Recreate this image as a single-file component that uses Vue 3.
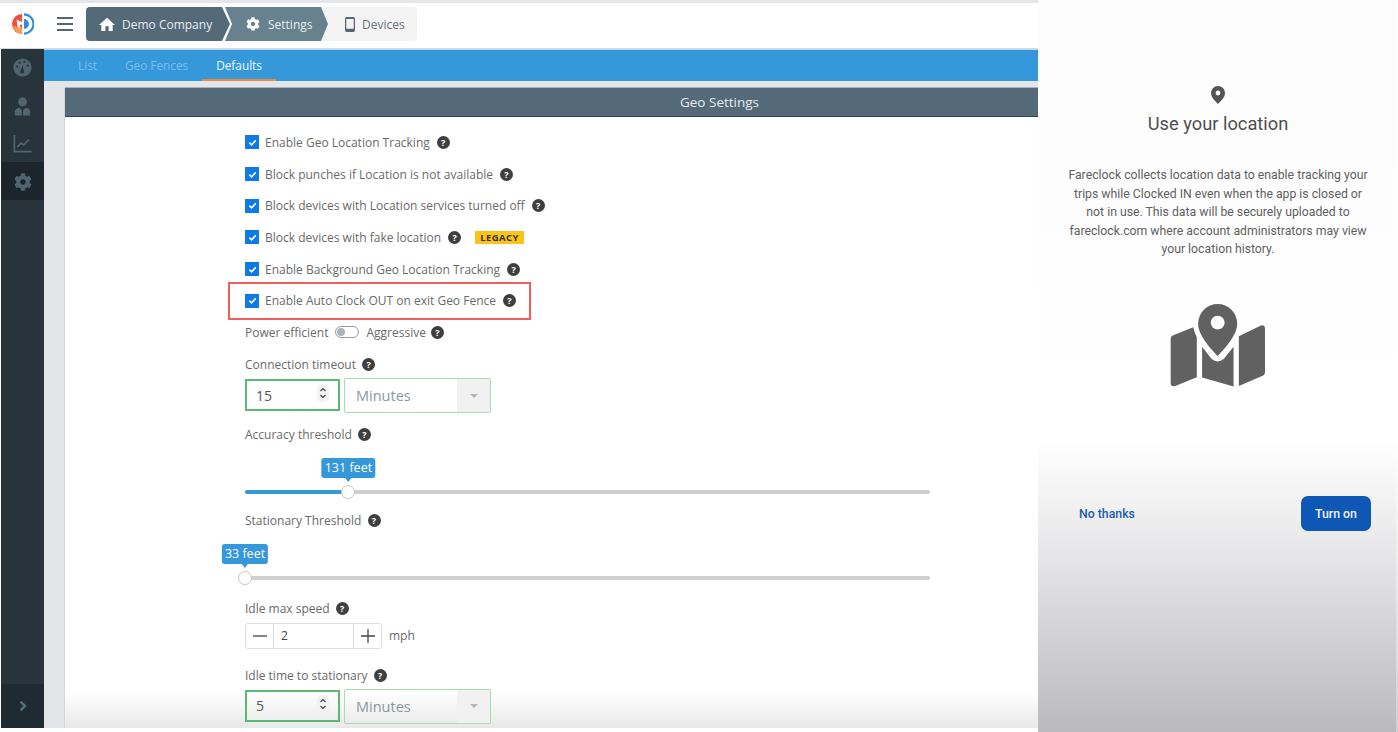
<script setup>
const gearPath = 'M487.4 315.7l-42.6-24.6c4.3-23.2 4.3-47 0-70.2l42.6-24.6c4.9-2.8 7.1-8.6 5.5-14-11.1-35.6-30-67.8-54.7-94.6-3.8-4.1-10-5.1-14.8-2.3L380.8 110c-17.9-15.4-38.5-27.3-60.8-35.1V25.8c0-5.6-3.9-10.5-9.4-11.7-36.7-8.2-74.3-7.8-109.2 0-5.5 1.2-9.4 6.1-9.4 11.7V75c-22.2 7.9-42.8 19.8-60.8 35.1L88.7 85.5c-4.9-2.8-11-1.9-14.8 2.3-24.7 26.7-43.6 58.9-54.7 94.6-1.7 5.4.6 11.2 5.5 14L67.3 221c-4.3 23.2-4.3 47 0 70.2l-42.6 24.6c-4.9 2.8-7.1 8.6-5.5 14 11.1 35.6 30 67.8 54.7 94.6 3.8 4.1 10 5.1 14.8 2.3l42.6-24.6c17.9 15.4 38.5 27.3 60.8 35.1v49.2c0 5.6 3.9 10.5 9.4 11.7 36.7 8.2 74.3 7.8 109.2 0 5.5-1.2 9.4-6.1 9.4-11.7v-49.2c22.2-7.9 42.8-19.8 60.8-35.1l42.6 24.6c4.9 2.8 11 1.9 14.8-2.3 24.7-26.7 43.6-58.9 54.7-94.6 1.5-5.5-.7-11.3-5.6-14.1zM256 336c-44.1 0-80-35.9-80-80s35.9-80 80-80 80 35.9 80 80-35.9 80-80 80z'

const checks = [
  { label: 'Enable Geo Location Tracking' },
  { label: 'Block punches if Location is not available' },
  { label: 'Block devices with Location services turned off' },
  { label: 'Block devices with fake location', badge: 'LEGACY' },
  { label: 'Enable Background Geo Location Tracking' },
  { label: 'Enable Auto Clock OUT on exit Geo Fence', marked: true }
]
</script>

<template>
  <div class="page">
    <div class="admin">
      <header class="topbar">
        <svg class="logo" viewBox="0 0 24 24">
          <path d="M11 1 A11 11 0 0 0 11 23 Z" fill="#f2503f" />
          <path d="M1 14 A10.5 10.5 0 0 0 11 23 L11 17 Z" fill="#f9a24e" />
          <path d="M13 1.5 A10.5 10.5 0 0 1 13 22.5" fill="none" stroke="#2f8fdc" stroke-width="2.4" />
          <path d="M13 6.5 A5.5 5.5 0 0 1 13 17.5 Z" fill="#2f8fdc" />
          <path d="M5 7 L11 10 L11 12.5 L8 13 L10 17 L6 15 Z" fill="#fff" />
        </svg>
        <div class="burger"><i></i><i></i><i></i></div>
        <nav class="crumbs">
          <div class="crumb crumb-a">
            <svg class="crumb-icon" viewBox="0 0 24 24"><path d="M12 2.5 L24 13.5 L20.5 13.5 L20.5 22.5 L14.5 22.5 L14.5 15.5 L9.5 15.5 L9.5 22.5 L3.5 22.5 L3.5 13.5 L0 13.5 Z" fill="#fff" /></svg>
            Demo Company
          </div>
          <div class="crumb crumb-b">
            <svg class="crumb-icon gear" viewBox="0 0 512 512"><path :d="gearPath" fill="#fff" /></svg>
            Settings
          </div>
          <div class="crumb crumb-c">
            <svg class="crumb-icon phone" viewBox="0 0 12 18"><path fill-rule="evenodd" d="M2 0 H10 A2 2 0 0 1 12 2 V16 A2 2 0 0 1 10 18 H2 A2 2 0 0 1 0 16 V2 A2 2 0 0 1 2 0 Z M1.5 2.5 V14 H10.5 V2.5 Z" fill="#55666f" /></svg>
            Devices
          </div>
        </nav>
      </header>

      <div class="body">
        <aside class="sidebar">
          <div class="side-item">
            <svg viewBox="0 0 20 20" width="19" height="19">
              <circle cx="10" cy="10" r="9.5" fill="#4f6670" />
              <path d="M7 16 L10 8 L12 16 Z" fill="#27343c" />
              <circle cx="4.5" cy="9" r="1.2" fill="#27343c" />
              <circle cx="7" cy="5" r="1.2" fill="#27343c" />
              <circle cx="12" cy="4" r="1.2" fill="#27343c" />
              <circle cx="15.5" cy="8" r="1.2" fill="#27343c" />
            </svg>
          </div>
          <div class="side-item side-user">
            <svg viewBox="0 0 20 22" width="17" height="19">
              <circle cx="10" cy="5.5" r="5.2" fill="#4f6670" />
              <path d="M1 21.5 L1 17 Q1 13.5 6 12.5 L9.2 15 L9.2 21.5 Z M19 21.5 L19 17 Q19 13.5 14 12.5 L10.8 15 L10.8 21.5 Z" fill="#4f6670" />
            </svg>
          </div>
          <div class="side-item">
            <svg viewBox="0 0 20 20" width="19" height="19" fill="none" stroke="#4f6670" stroke-width="1.7">
              <path d="M1.5 1 V18.5 H19.5" />
              <path d="M4.5 13.5 L8.5 9.5 L11 11.5 L17 6" />
            </svg>
          </div>
          <div class="side-item side-active">
            <svg viewBox="0 0 512 512" width="18" height="18"><path :d="gearPath" fill="#4f6670" /></svg>
          </div>
          <div class="side-foot">
            <svg viewBox="0 0 10 14" width="8" height="12" fill="none" stroke="#52707f" stroke-width="3"><path d="M2 1.5 L7.5 7 L2 12.5" /></svg>
          </div>
        </aside>

        <main class="content">
          <div class="tabs">
            <span class="tab">List</span>
            <span class="tab">Geo Fences</span>
            <span class="tab tab-active">Defaults</span>
          </div>
          <section class="card">
            <div class="card-head">Geo Settings</div>
            <div class="form">
              <div v-for="c in checks" :key="c.label" class="row" :class="{ marked: c.marked }">
                <span class="check">
                  <svg viewBox="0 0 10 10" width="9" height="9"><path d="M1.5 5.2 L4 7.6 L8.6 2.6" fill="none" stroke="#fff" stroke-width="1.8" /></svg>
                </span>
                <span>{{ c.label }}</span>
                <span class="help">?</span>
                <span v-if="c.badge" class="badge">{{ c.badge }}</span>
              </div>

              <div class="row">
                <span>Power efficient</span>
                <span class="toggle"><i></i></span>
                <span>Aggressive</span>
                <span class="help help-near">?</span>
              </div>

              <div class="label first-label">Connection timeout <span class="help">?</span></div>
              <div class="unit-row">
                <div class="num">15
                  <span class="spin"><svg viewBox="0 0 10 16" width="10" height="16" fill="none" stroke="#444" stroke-width="1.2"><path d="M2.5 6 L5 3.5 L7.5 6 M2.5 10 L5 12.5 L7.5 10" /></svg></span>
                </div>
                <div class="select">Minutes<span class="caret"><i></i></span></div>
              </div>

              <div class="label accuracy">Accuracy threshold <span class="help">?</span></div>
              <div class="slider">
                <div class="fill" style="width: 15.1%"></div>
                <div class="thumb" style="left: 15.1%"><span class="tip">131 feet</span></div>
              </div>

              <div class="label stationary">Stationary Threshold <span class="help">?</span></div>
              <div class="slider">
                <div class="thumb" style="left: 0"><span class="tip">33 feet</span></div>
              </div>

              <div class="label idle">Idle max speed <span class="help">?</span></div>
              <div class="stepper-row">
                <div class="stepper">
                  <span class="step">
                    <svg width="14" height="14" viewBox="0 0 14 14"><path d="M0 7 H14" stroke="#444" stroke-width="1.3" /></svg>
                  </span>
                  <span class="step-val">2</span>
                  <span class="step">
                    <svg width="14" height="14" viewBox="0 0 14 14"><path d="M0 7 H14 M7 0 V14" stroke="#444" stroke-width="1.3" /></svg>
                  </span>
                </div>
                <span>mph</span>
              </div>

              <div class="label idle-time">Idle time to stationary <span class="help">?</span></div>
              <div class="unit-row">
                <div class="num">5
                  <span class="spin"><svg viewBox="0 0 10 16" width="10" height="16" fill="none" stroke="#444" stroke-width="1.2"><path d="M2.5 6 L5 3.5 L7.5 6 M2.5 10 L5 12.5 L7.5 10" /></svg></span>
                </div>
                <div class="select">Minutes<span class="caret"><i></i></span></div>
              </div>
            </div>
            <div class="fade"></div>
          </section>
        </main>
      </div>
    </div>

    <aside class="phone-panel">
      <svg class="pin" viewBox="0 0 14 18" width="14" height="18">
        <path fill-rule="evenodd" d="M7 0 A7 7 0 0 1 14 7 C14 11.5 9.5 15.5 7 18 C4.5 15.5 0 11.5 0 7 A7 7 0 0 1 7 0 Z M7 4.6 A2.4 2.4 0 1 0 7 9.4 A2.4 2.4 0 1 0 7 4.6 Z" fill="#555" />
      </svg>
      <h2>Use your location</h2>
      <p>Fareclock collects location data to enable tracking your trips while Clocked IN even when the app is closed or not in use. This data will be securely uploaded to fareclock.com where account administrators may view your location history.</p>
      <svg class="map" viewBox="330 68 290 256" width="96" height="85">
        <g fill="#616161">
          <path d="M332 175 Q332 168 340 165 L400 141 Q404 156 411 172 L411 292 L346 318 Q333 322 332 310 Z" />
          <path d="M427 200 L455 236 Q474 252 493 236 L522 200 L522 320 L427 293 Z" />
          <path d="M538 168 L603 136 Q617 132 617 146 L617 275 Q617 285 608 288 L538 318 Z" />
          <path fill-rule="evenodd" d="M474 71 A59 59 0 0 1 533 130 C533 165 495 205 474 228 C453 205 415 165 415 130 A59 59 0 0 1 474 71 Z M474 106 A21 21 0 1 0 474 148 A21 21 0 1 0 474 106 Z" />
        </g>
      </svg>
      <div class="actions">
        <span class="no-thanks">No thanks</span>
        <span class="turn-on">Turn on</span>
      </div>
    </aside>
  </div>
</template>

<style>
html, body {
  margin: 0;
  background: #fff;
}
</style>

<style scoped>
.page {
  display: flex;
  width: 1398px;
  height: 732px;
  overflow: hidden;
  font-family: "Open Sans", sans-serif;
  font-size: 12px;
  color: #6a6a6a;
}

.admin {
  display: flex;
  flex-direction: column;
  flex: 0 0 1038px;
  overflow: hidden;
  border-top: 3px solid #e6e6ea;
  padding-bottom: 4px;
  box-sizing: border-box;
}

.topbar {
  display: flex;
  align-items: center;
  flex: 0 0 46px;
  box-sizing: border-box;
  padding: 0 0 3px 12px;
  border-bottom: 1px solid #d5dde3;
}

.logo {
  width: 22px;
  height: 22px;
}

.burger {
  display: flex;
  flex-direction: column;
  gap: 4px;
  margin-left: 23px;
  width: 16px;
}

.burger i {
  display: block;
  height: 2px;
  background: #56666f;
}

.crumbs {
  display: flex;
  margin-left: 13px;
  height: 34px;
}

.crumb {
  display: flex;
  align-items: center;
  height: 34px;
  box-sizing: border-box;
}

.crumb-a {
  position: relative;
  z-index: 3;
  width: 144px;
  padding-left: 13px;
  color: #e8edf0;
  background: #546a79;
  border-radius: 4px 0 0 4px;
  clip-path: polygon(0 0, 136px 0, 144px 50%, 136px 100%, 0 100%);
}

.crumb-b {
  position: relative;
  z-index: 2;
  width: 103px;
  margin-left: -5px;
  padding-left: 21px;
  color: #e8edf0;
  background: #67818f;
  clip-path: polygon(0 0, 96px 0, 103px 50%, 96px 100%, 0 100%, 7px 50%);
}

.crumb-c {
  width: 95px;
  margin-left: -6px;
  padding-left: 23px;
  color: #67757e;
  background: #f3f3f3;
  border-radius: 0 4px 4px 0;
}

.crumb-icon {
  width: 16px;
  height: 16px;
  margin-right: 7px;
}

.crumb-icon.gear {
  width: 14px;
  height: 14px;
  margin-right: 8px;
}

.crumb-icon.phone {
  width: 10px;
  height: 15px;
}

.body {
  display: flex;
  flex: 1;
  min-height: 0;
}

.sidebar {
  display: flex;
  flex-direction: column;
  flex: 0 0 43px;
  margin-left: 1px;
  background: #27343c;
}

.side-item {
  display: flex;
  align-items: center;
  justify-content: center;
  height: 38px;
}

.side-item:first-child {
  height: 37px;
}

.side-user {
  padding-top: 3px;
  box-sizing: border-box;
}

.side-active {
  padding-top: 1px;
  box-sizing: border-box;
  background: #1b252b;
}

.side-foot {
  display: flex;
  align-items: center;
  justify-content: center;
  height: 44px;
  margin-top: auto;
  background: #1f2b32;
}

.content {
  display: flex;
  flex-direction: column;
  flex: 1;
  min-width: 0;
  background: #e4e5e8;
}

.tabs {
  display: flex;
  flex: 0 0 32px;
  padding-left: 20px;
  background: #3498db;
  border-top: 1px solid #b8d6ea;
  box-sizing: border-box;
}

.tab {
  display: flex;
  align-items: center;
  padding: 0 14px;
  font-size: 11.8px;
  color: #7fbde6;
  border-bottom: 2px solid transparent;
}

.tab-active {
  color: #f3f8fc;
  border-bottom-color: #e58b3a;
}

.card {
  position: relative;
  flex: 1;
  width: 1310px;
  margin: 6px 0 0 20px;
  background: #fff;
  border-left: 1px solid #cfd6dc;
  box-sizing: border-box;
}

.card-head {
  height: 30px;
  line-height: 29px;
  text-align: center;
  font-size: 13.5px;
  color: #e6ebee;
  background: #546a79;
  border-top: 1px solid #a9b2b8;
  border-bottom: 1px solid #36474f;
  box-sizing: border-box;
}

.form {
  position: relative;
  z-index: 1;
  padding: 9.5px 0 0 180px;
}

.fade {
  position: absolute;
  left: 0;
  right: 0;
  bottom: 0;
  height: 36px;
  background: linear-gradient(rgba(228, 228, 230, 0), rgba(228, 228, 230, 0.85));
  pointer-events: none;
}

.row {
  display: flex;
  align-items: center;
  height: 31.7px;
  width: max-content;
}

.check {
  display: flex;
  align-items: center;
  justify-content: center;
  width: 14px;
  height: 14px;
  margin-right: 6px;
  background: #0f7ae5;
}

.help {
  display: inline-flex;
  align-items: center;
  justify-content: center;
  width: 13px;
  height: 13px;
  margin-left: 7px;
  border-radius: 50%;
  background: #3f3f3f;
  color: #fff;
  font-size: 9px;
  font-weight: 700;
  line-height: 1;
  vertical-align: 1px;
}

.badge {
  width: 49px;
  height: 13px;
  margin-left: 14px;
  line-height: 13px;
  text-align: center;
  font-size: 9.5px;
  font-weight: 700;
  letter-spacing: 0.4px;
  color: #333;
  background: #fcc419;
}

.marked {
  position: relative;
}

.marked::after {
  content: "";
  position: absolute;
  left: -17px;
  right: -15px;
  top: -3px;
  bottom: -3px;
  border: 2.5px solid #f25c5c;
}

.toggle {
  position: relative;
  width: 24px;
  height: 12px;
  margin: 0 7px;
  border: 1px solid #999;
  border-radius: 7px;
  background: #fff;
  box-sizing: border-box;
}

.toggle i {
  position: absolute;
  left: 1px;
  top: 1px;
  width: 8px;
  height: 8px;
  border-radius: 50%;
  background: #a9b4bc;
}

.help-near {
  margin-left: 5px;
}

.label {
  line-height: 20px;
}

.label .help {
  margin-left: 3px;
}

.first-label {
  margin-top: 7px;
}

.unit-row {
  display: flex;
  gap: 4px;
  margin-top: 4px;
  height: 33px;
}

.num {
  position: relative;
  display: flex;
  align-items: center;
  width: 95px;
  height: 32px;
  padding-left: 9px;
  border: 2px solid #5cb874;
  box-sizing: border-box;
  font-size: 14px;
  color: #555;
}

.spin {
  position: absolute;
  right: 9px;
  top: 3px;
  width: 12px;
  height: 18px;
  display: flex;
  align-items: center;
  justify-content: center;
  border-radius: 5px;
  background: #f2f2f2;
}

.select {
  position: relative;
  display: flex;
  align-items: center;
  width: 147px;
  height: 35px;
  margin-top: -1px;
  padding-left: 11px;
  border: 1px solid #a9dcb2;
  border-radius: 2px;
  box-sizing: border-box;
  font-size: 14.5px;
  color: #8a97a3;
}

.caret {
  position: absolute;
  right: 0;
  top: 0;
  bottom: 0;
  width: 33px;
  display: flex;
  align-items: center;
  justify-content: center;
  background: #f1f1f1;
}

.caret i {
  width: 0;
  height: 0;
  border-left: 4px solid transparent;
  border-right: 4px solid transparent;
  border-top: 4px solid #b5b5b5;
}

.accuracy {
  margin-top: 13px;
}

.stationary {
  margin-top: 17.5px;
}

.slider {
  position: relative;
  width: 685px;
  height: 4px;
  margin-top: 44.5px;
  border-radius: 2px;
  background: #cfcfcf;
}

.fill {
  position: absolute;
  left: 0;
  top: 0;
  bottom: 0;
  border-radius: 2px;
  background: #3498db;
}

.thumb {
  position: absolute;
  top: -5px;
  width: 14px;
  height: 14px;
  margin-left: -7px;
  border-radius: 50%;
  background: #fff;
  border: 1px solid #c4c4c4;
  box-sizing: border-box;
}

.tip {
  position: absolute;
  left: 50%;
  bottom: 20px;
  transform: translateX(-50%);
  padding: 0 3px;
  height: 20px;
  line-height: 20px;
  white-space: nowrap;
  font-size: 12.5px;
  color: #fff;
  background: #3498db;
  border-radius: 3px;
}

.tip::after {
  content: "";
  position: absolute;
  left: 50%;
  top: 100%;
  margin-left: -3px;
  border-left: 3px solid transparent;
  border-right: 3px solid transparent;
  border-top: 4px solid #3498db;
}

.idle {
  margin-top: 19px;
}

.stepper-row {
  display: flex;
  align-items: center;
  gap: 7px;
  margin-top: 4px;
}

.stepper {
  display: flex;
  width: 137px;
  height: 26px;
  border: 1px solid #ddd;
  border-radius: 3px;
  box-sizing: border-box;
  color: #444;
}

.step {
  display: flex;
  align-items: center;
  justify-content: center;
  flex: 0 0 27px;
}

.step-val {
  flex: 1;
  padding-left: 7px;
  line-height: 24px;
  border-left: 1px solid #ddd;
  border-right: 1px solid #ddd;
}

.idle-time {
  margin-top: 17px;
}

.phone-panel {
  display: flex;
  flex-direction: column;
  align-items: center;
  flex: 1;
  box-sizing: border-box;
  padding-top: 86px;
  background: linear-gradient(#fdfcfd 0, #fff 440px, #e6e6e8 555px, #bab9bc 732px);
  box-shadow: inset -2px 0 rgba(255, 255, 255, 0.35);
  font-family: Roboto, sans-serif;
}

.phone-panel h2 {
  margin: 8px 0 0;
  font-size: 18.3px;
  font-weight: 400;
  line-height: 24px;
  color: #4f4f4f;
}

.phone-panel p {
  width: 305px;
  margin: 30px 0 0;
  font-size: 12.25px;
  line-height: 18.5px;
  text-align: center;
  color: #5f5f5f;
}

.map {
  margin-top: 44.5px;
}

.actions {
  display: flex;
  align-items: center;
  justify-content: space-between;
  width: 292px;
  margin-top: 108px;
  margin-left: 14px;
}

.no-thanks {
  font-size: 12.3px;
  font-weight: 500;
  color: #1a5cab;
}

.turn-on {
  display: flex;
  align-items: center;
  justify-content: center;
  width: 70px;
  height: 35px;
  border-radius: 7px;
  font-size: 12.3px;
  font-weight: 500;
  color: #eef4fb;
  background: #0f57b5;
}
</style>
